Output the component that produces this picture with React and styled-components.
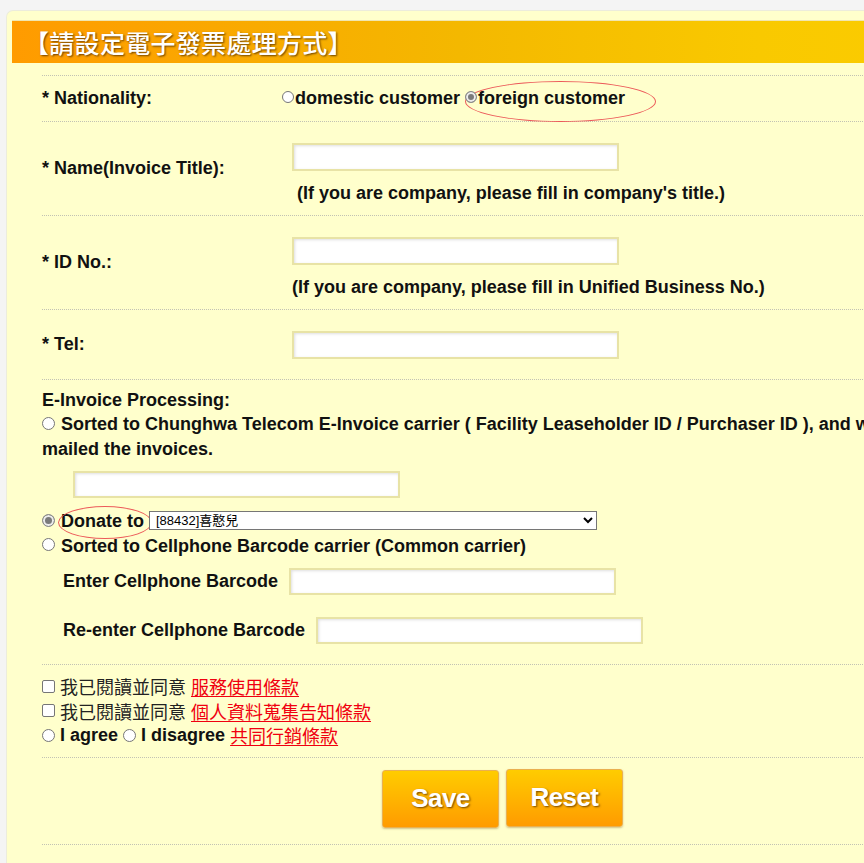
import React from "react";
import styled, { createGlobalStyle } from "styled-components";

const GlobalStyle = createGlobalStyle`
  html, body {
    margin: 0;
    padding: 0;
    overflow: hidden;
    background: #f4f4f4;
  }
  body {
    font-family: "Liberation Sans", Arial, "Noto Sans CJK TC", sans-serif;
  }
`;

const Page = styled.div`
  padding: 10px 0 0 6px;
  min-height: 863px;
  box-sizing: border-box;
`;

const Panel = styled.div`
  width: 1000px;
  min-height: 853px;
  padding-top: 9px;
  background: #ffffcc;
  border: 1px solid #ececdc;
  border-right: none;
  border-bottom: none;
  border-radius: 7px 0 0 0;
  box-sizing: border-box;
`;

const TitleBar = styled.div`
  margin-left: 5px;
  height: 42px;
  padding-left: 12px;
  background: linear-gradient(to right, #ff9b00 0%, #f4b800 45%, #f9c900 75%, #fccd00 100%);
  border-top: 1px solid #f0e6b0;
  color: #fff;
  font-family: "Noto Sans CJK TC", "Liberation Sans", sans-serif;
  font-size: 25px;
  font-weight: 500;
  line-height: 42px;
  text-shadow: 1px 1px 2px rgba(60, 30, 0, 0.75);
  letter-spacing: 0.3px;
`;

const Form = styled.div`
  width: 921px;
  margin: 12px 0 0 35px;
  color: #111;
  font-size: 18px;
  font-weight: bold;
  line-height: 24.5px;
`;

const Row = styled.div`
  display: grid;
  grid-template-columns: 240px 1fr;
  align-items: center;
  border-top: 1px dotted #c2c2b4;
  padding: ${(p) => p.$pad || "10px 0"};
`;

const Label = styled.div`
  padding-bottom: ${(p) => p.$lift || 0}px;
`;

const Section = styled.div`
  border-top: 1px dotted #c2c2b4;
  padding: ${(p) => p.$pad || "9px 0"};
`;

const Field = styled.div`
  display: flex;
  flex-direction: column;
  align-items: flex-start;
`;

const TextInput = styled.input.attrs({ type: "text" })`
  width: 327px;
  height: ${(p) => p.$h || 28}px;
  margin: ${(p) => p.$margin || "0 0 0 10px"};
  border: 2px solid #e8e3a6;
  box-shadow: inset 1px 1px 3px rgba(0, 0, 0, 0.13);
  background: #fff;
  box-sizing: border-box;
  outline: none;
  flex: none;
`;

const Hint = styled.div`
  margin-top: 12px;
  padding-left: ${(p) => p.$indent || 10}px;
  line-height: 20px;
`;

const Radio = styled.input.attrs({ type: "radio" })`
  appearance: none;
  flex: none;
  width: ${(p) => p.$size || 13}px;
  height: ${(p) => p.$size || 13}px;
  margin: 0 ${(p) => (p.$gap === undefined ? 4 : p.$gap)}px 0 0;
  border: 1px solid #767676;
  border-radius: 50%;
  background: #fff;
  vertical-align: middle;
  position: relative;
  top: ${(p) => (p.$flat ? 0 : -2)}px;
  box-sizing: border-box;

  &:checked {
    border-color: #8a8a8a;
    background: #7a7a7a;
    box-shadow: inset 0 0 0 2px #ececec;
  }
`;

const Check = styled.input.attrs({ type: "checkbox" })`
  appearance: none;
  flex: none;
  width: 13px;
  height: 13px;
  margin: 0;
  border: 1px solid #767676;
  border-radius: 2px;
  background: #fff;
  box-sizing: border-box;
`;

const Marked = styled.span`
  position: relative;
`;

const Ellipse = styled.span`
  position: absolute;
  left: ${(p) => p.$x}px;
  top: ${(p) => p.$y}px;
  width: ${(p) => p.$w}px;
  height: ${(p) => p.$h}px;
  border: 1px solid #ec5a5a;
  border-radius: 50%;
  pointer-events: none;
`;

const Line = styled.div`
  height: 24.5px;
  white-space: nowrap;
`;

const TermLine = styled.div`
  display: flex;
  align-items: center;
  gap: 5px;
  height: 24.5px;
  white-space: nowrap;
`;

const CarrierInput = styled.div`
  margin: 10px 0 11px 31px;
  display: flex;
`;

const Select = styled.select`
  width: 448px;
  height: 19px;
  margin-left: 5px;
  padding: 0 2px;
  border: 1px solid #767676;
  border-radius: 0;
  background: #fff;
  color: #000;
  font-family: "Liberation Sans", Arial, "Noto Sans CJK TC", sans-serif;
  font-size: 13px;
  font-weight: normal;
  vertical-align: middle;
  position: relative;
  top: -2px;
`;

const BarcodeRow = styled.div`
  display: flex;
  align-items: center;
  gap: 11px;
  padding-left: 21px;
  margin-top: ${(p) => p.$top || 11}px;
`;

const Zh = styled.span`
  font-family: "Noto Sans CJK TC", sans-serif;
  font-weight: normal;
  color: #222;
  line-height: 1;
`;

const TermLink = styled.a`
  font-family: "Noto Sans CJK TC", sans-serif;
  font-weight: normal;
  line-height: 1;
  color: #f00010;
  text-decoration: underline;
  text-underline-offset: 2px;
`;

const Buttons = styled.div`
  display: flex;
  justify-content: center;
  align-items: flex-start;
  gap: 7px;
`;

const OrangeButton = styled.button`
  width: 117px;
  height: 58px;
  margin-top: ${(p) => p.$top || 0}px;
  border: 1px solid #eab050;
  border-radius: 3px;
  background: linear-gradient(to bottom, #ffcc00 0%, #ffb400 50%, #ff9b00 100%);
  box-shadow: 0 1px 2px rgba(120, 80, 0, 0.35);
  color: #fff;
  font-family: "Liberation Sans", Arial, sans-serif;
  font-size: 26px;
  font-weight: 600;
  letter-spacing: -0.6px;
  text-shadow: 1px 1px 2px rgba(90, 50, 0, 0.85);
  cursor: pointer;
`;

export default function App() {
  return (
    <>
      <GlobalStyle />
      <Page>
        <Panel>
          <TitleBar>【請設定電子發票處理方式】</TitleBar>
          <Form>
            <Row>
              <div>* Nationality:</div>
              <div>
                <Radio name="nat" $size={12} $gap={1} />
                domestic customer{" "}
                <Marked>
                  <Ellipse $x={0} $y={-7} $w={189} $h={39} />
                  <Radio name="nat" $size={12} $gap={1} defaultChecked />
                  foreign customer
                </Marked>
              </div>
            </Row>

            <Row $pad="21px 0 12px">
              <Label $lift={8}>* Name(Invoice Title):</Label>
              <Field>
                <TextInput />
                <Hint $indent={15}>(If you are company, please fill in company's title.)</Hint>
              </Field>
            </Row>

            <Row $pad="21px 0 12px">
              <Label $lift={8}>* ID No.:</Label>
              <Field>
                <TextInput />
                <Hint>(If you are company, please fill in Unified Business No.)</Hint>
              </Field>
            </Row>

            <Row $pad="21px 0 20px">
              <Label>* Tel:</Label>
              <Field>
                <TextInput />
              </Field>
            </Row>

            <Section $pad="8px 0 20px">
              <Line>E-Invoice Processing:</Line>
              <Line>
                <Radio name="proc" $gap={6} />
                Sorted to Chunghwa Telecom E-Invoice carrier ( Facility Leaseholder ID / Purchaser ID ), and won't be
              </Line>
              <Line>mailed the invoices.</Line>
              <CarrierInput>
                <TextInput $h={27} $margin="0" />
              </CarrierInput>
              <Line>
                <Radio name="proc" $gap={6} defaultChecked />
                <Marked>
                  <Ellipse $x={-3} $y={-5} $w={92} $h={31} />
                  Donate to
                </Marked>
                <Select defaultValue="88432">
                  <option value="88432">[88432]喜憨兒</option>
                </Select>
              </Line>
              <Line>
                <Radio name="proc" $gap={6} />
                Sorted to Cellphone Barcode carrier (Common carrier)
              </Line>
              <BarcodeRow $top={10}>
                <span>Enter Cellphone Barcode</span>
                <TextInput $h={27} $margin="0" />
              </BarcodeRow>
              <BarcodeRow $top={22}>
                <span>Re-enter Cellphone Barcode</span>
                <TextInput $h={27} $margin="0" />
              </BarcodeRow>
            </Section>

            <Section $pad="9px 0 9px">
              <TermLine>
                <Check />
                <Zh>我已閱讀並同意</Zh>
                <TermLink href="#">服務使用條款</TermLink>
              </TermLine>
              <TermLine>
                <Check />
                <Zh>我已閱讀並同意</Zh>
                <TermLink href="#">個人資料蒐集告知條款</TermLink>
              </TermLine>
              <TermLine>
                <Radio name="agree" $gap={0} $flat />
                <span>I agree</span>
                <Radio name="agree" $gap={0} $flat />
                <span>I disagree</span>
                <TermLink href="#">共同行銷條款</TermLink>
              </TermLine>
            </Section>

            <Section $pad="11px 0 16px">
              <Buttons>
                <OrangeButton $top={1}>Save</OrangeButton>
                <OrangeButton>Reset</OrangeButton>
              </Buttons>
            </Section>
            <Section $pad="0" />
          </Form>
        </Panel>
      </Page>
    </>
  );
}
